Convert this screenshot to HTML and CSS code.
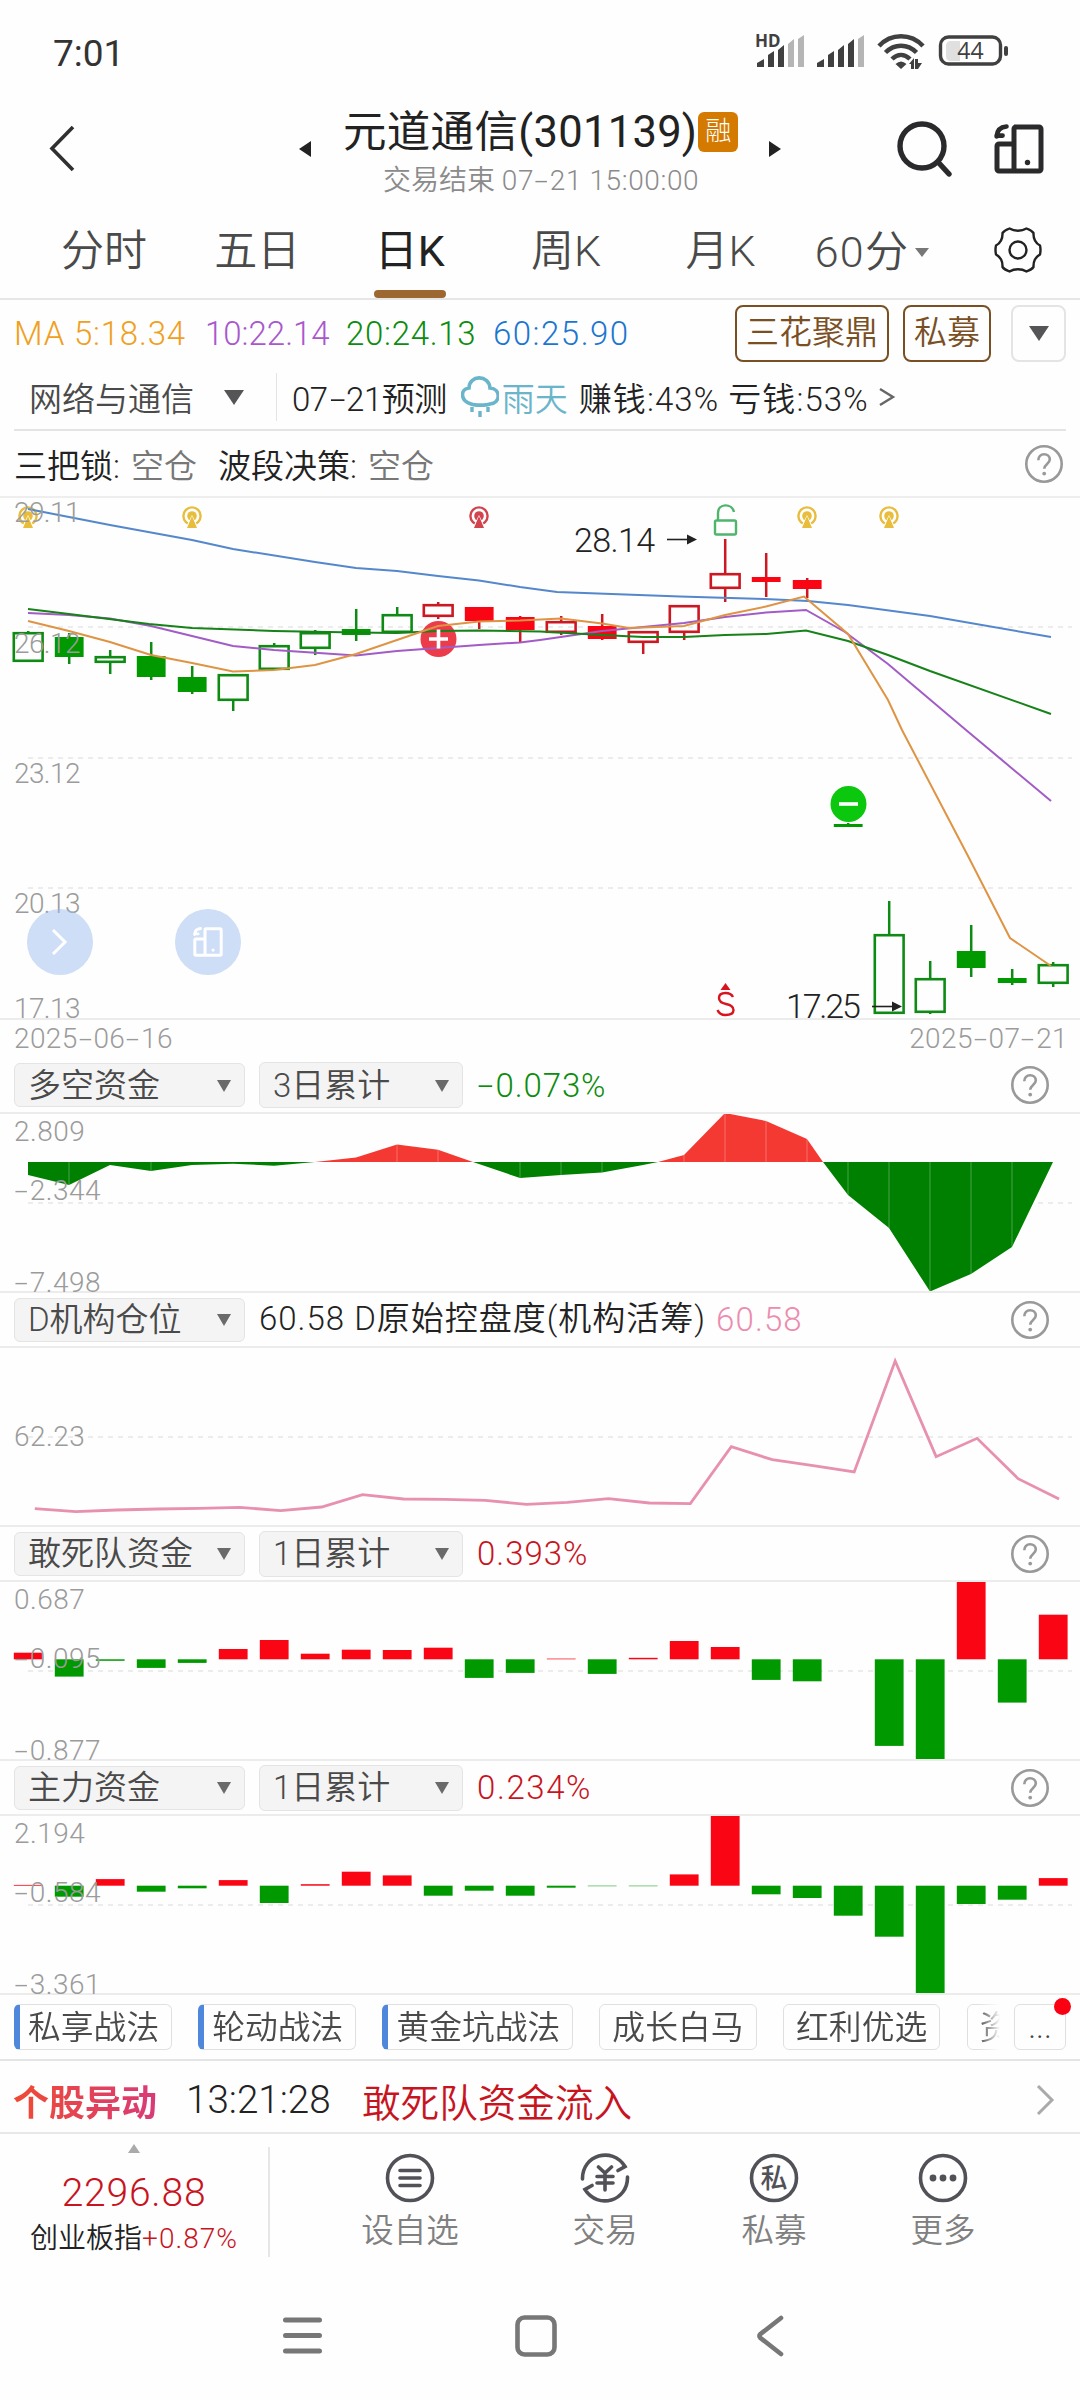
FILE: index.html
```html
<!DOCTYPE html>
<html lang="zh-CN">
<head>
<meta charset="utf-8">
<title>元道通信(301139)</title>
<link rel="stylesheet" href="styles.css">
</head>
<body>
<svg class="defs" width="0" height="0" aria-hidden="true">
  <symbol id="help" viewBox="0 0 40 40"><circle cx="20" cy="20" r="17.7" fill="none" stroke="#999" stroke-width="2.6"/><path d="M14.3 16.2c0-3.600 2.500-5.900 5.800-5.900s5.700 2.200 5.700 5.200c0 4.300-5.600 4.600-5.600 9.300" fill="none" stroke="#999" stroke-width="2.600"/><circle cx="20.200" cy="29.600" r="1.900" fill="#999"/></symbol>
  <symbol id="rotate" viewBox="0 0 50 50"><path d="M20 3h25a2 2 0 0 1 2 2v40a2 2 0 0 1-2 2H5a2 2 0 0 1-2-2V22a2 2 0 0 1 2-2h14M20 47V5a2 2 0 0 1 2-2" fill="none" stroke="currentColor" stroke-width="5"/><circle cx="33.500" cy="38.500" r="2.700" fill="currentColor"/><path d="M12.500 2.500C6 3 3 6.500 2.600 12.500M2.600 11.600h6" fill="none" stroke="currentColor" stroke-width="4.600" stroke-linecap="round"/></symbol>
</svg>
<main class="screen">
  <header class="status">
    <span class="clock">7:01</span>
    <div class="signals">
      <svg width="254" height="40" viewBox="0 0 254 40">
        <text x="0" y="13" class="hd">HD</text>
        <g fill="#404040"><path d="M2 33v-4l7-4v8zM13 33V21l6-4v16zM23 33V16l6-5v22z"/><path d="M62 33v-4l7-4v8zM73 33V21l6-4v16zM83 33V16l6-5v22zM93 33V10l6-5v28z"/></g>
        <g fill="#b5b5b5"><path d="M33 33V10l6-5v28zM43 33V5l6-4v32zM103 33V5l6-4v32z"/></g>
        <g fill="none" stroke="#404040" stroke-width="4.500"><path d="M124 12c12-13 32-13 44 0M130.500 18.500c9-9 22-9 31 0M137 25c5.500-5.500 12.500-5.500 18 0"/></g>
        <path d="M140.500 30q5.500-5 11 0l-5.500 5zM154 30l5-6v11h-3v-5zM160 35V25h3v4h4l-4 6z" fill="#404040"/>
        <rect x="185.500" y="3" width="60" height="27" rx="8" fill="#fff" stroke="#404040" stroke-width="3.400"/>
        <path d="M196 7h9v20h-9q-5 0-5-5V12q0-5 5-5z" fill="#e0e0e0"/>
        <rect x="249" y="12" width="4" height="10" rx="2" fill="#404040"/>
        <text x="215.500" y="25" class="battery" text-anchor="middle">44</text>
      </svg>
    </div>
  </header>

  <section class="titlebar">
    <svg class="back" width="30" height="50" viewBox="0 0 30 50"><path d="M25 3L4 24.500 25 46" fill="none" stroke="#303030" stroke-width="3.600"/></svg>
    <svg class="prev" width="12" height="16" viewBox="0 0 12 16"><path d="M12 0v16L0 8z" fill="#222"/></svg>
    <div class="names">
      <div class="name"><span>元道通信(301139)</span><b class="badge">融</b></div>
      <div class="session">交易结束 <span>07<i class="dash">-</i>21 15:00:00</span></div>
    </div>
    <svg class="next" width="12" height="16" viewBox="0 0 12 16"><path d="M0 0v16l12-8z" fill="#222"/></svg>
    <svg class="search" width="56" height="58" viewBox="0 0 56 58"><circle cx="26" cy="26" r="22" fill="none" stroke="#2a2a2c" stroke-width="5.400"/><path d="M42 42l11 12" stroke="#2a2a2c" stroke-width="5.400" stroke-linecap="round"/></svg>
    <svg class="turn" width="50" height="50"><use href="#rotate"/></svg>
  </section>

  <nav class="tabs">
    <span>分时</span><span>五日</span><span class="on">日K</span><span>周K</span><span>月K</span><span class="mins">60分<i></i></span>
    <svg width="48" height="48" viewBox="0 0 48 48"><path d="M15.500 2.500c5 3 12 3 17 0 3.500 1.300 6 3 7 4.500-.300 6.500 2 10 6.500 12.500q1 4.500 0 9c-4.500 2.500-6.800 6-6.500 12.500-1 1.500-3.500 3.200-7 4.500-5-3-12-3-17 0-3.500-1.300-6-3-7-4.500.300-6.500-2-10-6.500-12.500q-1-4.500 0-9C6.500 17 8.800 13.500 8.500 7c1-1.500 3.500-3.200 7-4.500z" fill="none" stroke="#222" stroke-width="2.400"/><circle cx="24" cy="24" r="8.500" fill="none" stroke="#222" stroke-width="2.400"/></svg>
  </nav>

  <section class="averages">
    <span class="ma5">MA 5:18.34</span><span class="ma10">10:22.14</span><span class="ma20">20:24.13</span><span class="ma60">60:25.90</span>
    <div class="picks"><span class="pick">三花聚鼎</span><span class="pick">私募</span><span class="drop"><i class="tri"></i></span></div>
  </section>

  <section class="forecast">
    <span class="sector">网络与通信</span><i class="tri"></i>
    <span class="day">07<i class="dash">-</i>21预测</span>
    <svg width="38" height="42" viewBox="0 0 38 42"><path d="M10 28C-1 25-1 13 8 12 8-1 28-2 29 12c11 1 11 15 0 16-4 1.500-15 1.500-19 0z" fill="none" stroke="#6bb5ca" stroke-width="3.600"/><path d="M11 31v5M19 35v6M27 31v5" stroke="#6bb5ca" stroke-width="3.400"/></svg>
    <span class="rain">雨天</span><span class="win">赚钱:43%</span><span class="lose">亏钱:53%</span>
    <svg class="go" width="18" height="20" viewBox="0 0 18 20"><path d="M2 2l13 8-13 8" fill="none" stroke="#666" stroke-width="2.400"/></svg>
  </section>

  <section class="locks">
    <span>三把锁:</span><em>空仓</em><span class="band">波段决策:</span><em>空仓</em>
    <svg width="40" height="40"><use href="#help"/></svg>
  </section>

  <section class="chart main-chart">
    <svg id="kline" width="1080" height="520" viewBox="0 498 1080 520"></svg>
    <span class="axis" style="top:-1px">29.11</span><span class="axis" style="top:130px">26.12</span><span class="axis" style="top:260px">23.12</span><span class="axis" style="top:390px">20.13</span><span class="axis" style="top:495px">17.13</span>
    <span class="price high">28.14</span><span class="price low">17.25</span>
    <span class="float first"><svg width="20" height="28" viewBox="0 0 20 28"><path d="M3 2l12 12L3 26" fill="none" stroke="#fff" stroke-width="3"/></svg></span>
    <span class="float second"><svg width="30" height="30"><use href="#rotate"/></svg></span>
  </section>
  <section class="dates"><span>2025<i class="dash">-</i>06<i class="dash">-</i>16</span><span>2025<i class="dash">-</i>07<i class="dash">-</i>21</span></section>

  <section class="bar tall"><span class="select">多空资金<i class="tri"></i></span><span class="select narrow">3日累计<i class="tri"></i></span><span class="down"><i class="dash">-</i>0.073%</span><svg width="40" height="40"><use href="#help"/></svg></section>
  <section class="chart">
    <svg id="flow" width="1080" height="177" viewBox="0 1114 1080 177"></svg>
    <span class="axis" style="top:2px">2.809</span><span class="axis" style="top:61px"><i class="dash">-</i>2.344</span><span class="axis" style="top:153px"><i class="dash">-</i>7.498</span>
  </section>

  <section class="bar"><span class="select">D机构仓位<i class="tri"></i></span><span class="hold">60.58 D原始控盘度(机构活筹)</span><span class="pink">60.58</span><svg width="40" height="40"><use href="#help"/></svg></section>
  <section class="chart">
    <svg id="holding" width="1080" height="177" viewBox="0 1348 1080 177"></svg>
    <span class="axis" style="top:73px">62.23</span>
  </section>

  <section class="bar"><span class="select">敢死队资金<i class="tri"></i></span><span class="select narrow">1日累计<i class="tri"></i></span><span class="up">0.393%</span><svg width="40" height="40"><use href="#help"/></svg></section>
  <section class="chart">
    <svg id="squad" width="1080" height="177" viewBox="0 1582 1080 177"></svg>
    <span class="axis" style="top:2px">0.687</span><span class="axis" style="top:61px"><i class="dash">-</i>0.095</span><span class="axis" style="top:153px"><i class="dash">-</i>0.877</span>
  </section>

  <section class="bar"><span class="select">主力资金<i class="tri"></i></span><span class="select narrow">1日累计<i class="tri"></i></span><span class="up wide">0.234%</span><svg width="40" height="40"><use href="#help"/></svg></section>
  <section class="chart">
    <svg id="majors" width="1080" height="177" viewBox="0 1816 1080 177"></svg>
    <span class="axis" style="top:2px">2.194</span><span class="axis" style="top:61px"><i class="dash">-</i>0.584</span><span class="axis" style="top:153px"><i class="dash">-</i>3.361</span>
  </section>

  <section class="tags">
    <div class="strip"><span class="tag vip">私享战法</span><span class="tag vip">轮动战法</span><span class="tag vip">黄金坑战法</span><span class="tag">成长白马</span><span class="tag">红利优选</span><span class="tag">资</span></div>
    <span class="more">...<i></i></span>
  </section>

  <section class="alert"><b>个股异动</b><time>13:21:28</time><span>敢死队资金流入</span><svg width="20" height="32" viewBox="0 0 20 32"><path d="M3 2l14 14L3 30" fill="none" stroke="#aaa" stroke-width="3"/></svg></section>

  <footer class="dock">
    <div class="index"><i class="caret"></i><strong>2296.88</strong><small>创业板指<em>+0.87%</em></small></div>
    <div class="action a1"><svg viewBox="0 0 50 50"><circle cx="25" cy="25" r="22.500"/><path d="M15 17.500h20M15 25h20M15 32.500h20"/></svg><span>设自选</span></div>
    <div class="action a2"><svg viewBox="0 0 50 50"><path d="M2.500 26C2 2 32-7 45 13.500l-7 4M47.500 24C48 48 18 57 5 36.500l7-4M18.500 14l6.500 6 6.500-6M17 23.500h16M17 30h16M25 20v17"/></svg><span>交易</span></div>
    <div class="action a3"><svg viewBox="0 0 50 50"><circle cx="25" cy="25" r="22.500"/><text x="25" y="35" text-anchor="middle" class="glyph">私</text></svg><span>私募</span></div>
    <div class="action a4"><svg viewBox="0 0 50 50"><circle cx="25" cy="25" r="22.500"/><g class="dots"><circle cx="15" cy="25" r="3.400"/><circle cx="25" cy="25" r="3.400"/><circle cx="35" cy="25" r="3.400"/></g></svg><span>更多</span></div>
  </footer>

  <nav class="system">
    <svg width="40" height="42" viewBox="0 0 40 42"><path d="M2.500 5h34M2.500 20.500h34M2.500 36h34" stroke="#777" stroke-width="5" stroke-linecap="round"/></svg>
    <svg width="42" height="42" viewBox="0 0 42 42"><rect x="2.500" y="2.500" width="37" height="37" rx="7" fill="none" stroke="#777" stroke-width="4.600"/></svg>
    <svg width="28" height="42" viewBox="0 0 28 42"><path d="M25 3L4.500 19q-2 2 0 4L25 39" fill="none" stroke="#777" stroke-width="4.600" stroke-linecap="round"/></svg>
  </nav>
</main>
<script src="charts.js"></script>
</body>
</html>
```
FILE: styles.css
```css
* { box-sizing: border-box; }
body { margin: 0; background: #fefefe; font-family: Roboto, "Noto Sans CJK SC", sans-serif; font-weight: 350; font-size: 33px; color: #222; }
i, em { font-style: normal; }
svg { display: block; flex: none; }
.defs { position: absolute; }
.screen { width: 1080px; height: 2400px; display: flex; flex-direction: column; overflow: hidden; white-space: nowrap; }
.screen > * { flex: none; }
.dash { display: inline-block; width: .56em; text-align: center; transform: scaleX(1.75); }
.tri { border: 10px solid transparent; border-top: 15px solid #555558; border-bottom: 0; }

.status { height: 104px; display: flex; align-items: center; justify-content: space-between; padding: 3px 71px 0 53px; }
.clock { font-size: 37px; font-weight: 400; color: #333; }
.signals svg { overflow: visible; }
.hd { font: 700 17px "Noto Sans", sans-serif; fill: #404040; }
.battery { font: 400 23px "Open Sans", sans-serif; fill: #404040; }

.titlebar { height: 102px; display: flex; align-items: center; padding: 0 36px 0 48px; }
.back { margin-top: -12px; }
.prev { margin: -12px 0 0 221px; }
.names { width: 396px; margin-left: 32px; height: 100px; }
.name { display: flex; align-items: flex-start; height: 58px; font-size: 43.500px; line-height: 56px; font-weight: 400; letter-spacing: .3px; }
.badge { width: 40px; height: 40px; margin: 7px 0 0 1px; border-radius: 6px; background: #d57a00; color: #fff; font-size: 26px; font-weight: 300; line-height: 39px; text-align: center; }
.session { font-size: 28px; line-height: 36px; color: #8b8b8b; padding-left: 40px; }
.session span { letter-spacing: .6px; }
.next { margin: -12px 0 0 30px; }
.search { margin: -12px 0 0 115px; }
.turn { margin: -12px 0 0 auto; color: #2a2a2c; }

.tabs { height: 94px; display: flex; align-items: center; border-bottom: 2px solid #e6e6e6; font-size: 43px; color: #4a4a4a; padding: 0 38px 0 61px; }
.tabs span { width: 154px; line-height: 90px; height: 92px; }
.tabs .on { color: #222; font-weight: 400; position: relative; left: 7px; }
.tabs .on::after { content: ""; position: absolute; left: -1px; bottom: 0; width: 72px; height: 8px; border-radius: 4px; background: #9d6732; }
.tabs span:nth-child(4) { padding-left: 10px; }
.tabs span:nth-child(5) { padding-left: 11px; }
.tabs .mins { display: flex; align-items: center; padding-left: 0; margin-left: -13px; width: 180px; gap: 6px; letter-spacing: 1.2px; }
.mins i { border: 7px solid transparent; border-top: 9px solid #777; border-bottom: 0; }
.tabs svg { margin: -5px 0 0 auto; }

.averages { height: 67px; display: flex; align-items: center; padding-left: 14px; }
.averages .ma5 { color: #f0a020; width: 191px; letter-spacing: .8px; }
.averages .ma10 { color: #a858cc; width: 141px; }
.averages .ma20 { color: #0d8c0d; width: 147px; letter-spacing: .7px; }
.averages .ma60 { color: #1b76d0; letter-spacing: 1.5px; }
.picks { margin: 0 14px 0 auto; display: flex; }
.pick { height: 57px; margin-right: 14px; padding: 0 9px; border: 2px solid #7a4f24; border-radius: 8px; color: #7a4f24; line-height: 51px; }
.drop { width: 55px; height: 57px; margin-left: 6px; border: 2px solid #e4e4e4; border-radius: 8px; display: flex; align-items: center; justify-content: center; }

.forecast { height: 64px; margin: 0 14px; padding-bottom: 2px; display: flex; align-items: center; border-bottom: 2px solid #e4e4e4; }
.sector { width: 210px; padding-left: 15px; color: #4a4a4a; }
.day { margin-left: 32px; padding-left: 15px; border-left: 1px solid #e4e4e4; letter-spacing: -.5px; }
.forecast svg { margin-left: 14px; }
.rain { color: #6bb5ca; margin-left: 3px; }
.win, .lose { letter-spacing: 1.1px; }
.win { margin-left: 11px; }
.lose { margin-left: 9px; }
.forecast .go { margin-left: 9px; }

.locks { height: 67px; display: flex; align-items: center; padding: 0 16px 0 14px; border-bottom: 2px solid #eee; }
.locks em { color: #777; margin-left: 11px; }
.band { margin-left: 21px; }
.locks svg { margin-left: auto; }

.chart { position: relative; border-bottom: 2px solid #ececec; }
.axis { position: absolute; left: 14px; font-size: 28px; line-height: 32px; color: #9b9b9b; letter-spacing: .5px; }
.main-chart .axis { letter-spacing: -.6px; }
.price { position: absolute; line-height: 40px; font-size: 34px; letter-spacing: -.6px; }
.high { left: 574px; top: 22px; }
.low { left: 786px; top: 488px; letter-spacing: -2.2px; }
.float { position: absolute; width: 66px; height: 66px; border-radius: 50%; background: rgba(155,190,238,.5); top: 411px; display: flex; align-items: center; justify-content: center; color: #fff; }
.first { left: 27px; }
.second { left: 175px; }

.dates { height: 38px; display: flex; justify-content: space-between; padding: 1px 12px 0 14px; font-size: 28px; line-height: 36px; color: #9b9b9b; letter-spacing: .4px; }

.bar { height: 55px; display: flex; align-items: center; padding: 0 30px 0 14px; border-bottom: 2px solid #ececec; }
.tall { height: 56px; }
.select { width: 231px; height: 44px; padding: 0 13px 0 13px; display: flex; align-items: center; justify-content: space-between; background: #f4f4f4; border: 1px solid #e4e4e4; border-radius: 6px; color: #4a4a4a; margin-right: 14px; line-height: 42px; }
.tall .select { padding-top: 2px; }
.narrow { width: 204px; height: 46px; }
.select .tri { border-width: 12px 7.500px 0; border-top-color: #6a6a6a; }
.bar svg { margin-left: auto; }
.up { color: #c8141e; letter-spacing: 1px; }
.wide { letter-spacing: 1.6px; }
.down { color: #0d8c0d; letter-spacing: .9px; }
.hold { letter-spacing: 1px; line-height: 50px; padding-bottom: 2px; }
.pink { color: #ec8cae; margin-left: 10px; letter-spacing: 1.1px; }

.tags { height: 66px; display: flex; padding: 9px 14px 0; border-bottom: 2px solid #e4e4e4; }
.strip { width: 986px; height: 48px; display: flex; overflow: hidden; -webkit-mask-image: linear-gradient(90deg, #000 965px, transparent 986px); mask-image: linear-gradient(90deg, #000 965px, transparent 986px); }
.tag { flex: none; height: 46px; padding: 0 12px; margin-right: 26.500px; border: 1px solid #e0e0e0; border-radius: 6px; color: #4a4a4a; font-size: 32.800px; line-height: 46px; }
.vip { border-left: 6px solid #4f87dc; padding: 0 12px 0 8px; margin-right: 26px; }
.more { width: 52px; height: 46px; margin-left: auto; border: 1px solid #e0e0e0; border-radius: 6px; text-align: center; position: relative; line-height: 44px; color: #444; }
.more i { position: absolute; width: 17px; height: 17px; border-radius: 50%; background: #fa0012; top: -7px; right: -6px; }

.alert { height: 73px; display: flex; align-items: center; padding: 6px 25px 0 13px; border-bottom: 2px solid #e8e8e8; font-size: 38.600px; }
.alert b { font-size: 36px; font-weight: 700; background: linear-gradient(90deg, #f04b32, #d83a78); -webkit-background-clip: text; background-clip: text; color: transparent; }
.alert time { width: 144px; margin: 0 32px 0 29px; }
.alert span { color: #c8141e; }
.alert svg { margin-left: auto; }

.dock { height: 142px; display: flex; }
.index { width: 270px; height: 110px; margin-top: 13px; border-right: 2px solid #e6e6e6; display: flex; flex-direction: column; align-items: center; }
.caret { border: 6px solid transparent; border-bottom: 9px solid #aaa; border-top: 0; margin-top: -3px; }
.index strong { font-size: 39px; font-weight: 300; line-height: 46px; margin-top: 17px; color: #c8141e; letter-spacing: .8px; }
.index small { font-size: 28px; line-height: 34px; margin-top: 6px; }
.index em { color: #c8141e; letter-spacing: 1px; }
.action { display: flex; flex-direction: column; align-items: center; padding-top: 19px; color: #808080; width: 168px; }
.action svg { width: 50px; height: 50px; fill: none; stroke: #515158; stroke-width: 3.600; stroke-linecap: round; }
.action span { line-height: 40px; margin-top: 8px; font-size: 32.500px; }
.action .dots { fill: #515158; stroke: none; }
.action .glyph { fill: #515158; stroke: none; font-size: 27px; font-weight: 500; }
.a1 { margin-left: 56px; }
.a2 { margin-left: 27px; }
.a3 { margin-left: 1px; }
.a4 { margin-left: 1px; }

.system { height: 119px; display: flex; align-items: center; }
.system svg:nth-child(1) { margin-left: 283px; }
.system svg:nth-child(2) { margin-left: 192px; }
.system svg:nth-child(3) { margin-left: 199px; }
```
FILE: charts.js
```js
const GREEN = '#009900', RED = '#fa0514', DGREEN = '#0f8a14', DRED = '#cb1823';
const x = i => 28.2 + 41 * i;
const line = (pts, color, w) => `<polyline points="${pts}" fill="none" stroke="${color}" stroke-width="${w}"/>`;
const grid = y => `<path d="M28 ${y}H1072" stroke="#ececec" stroke-width="2" stroke-dasharray="5 5"/>`;

// [kind, body top, body bottom, wick top, wick bottom]; kind: g/r = hollow, G/R = solid
const candles = [
  ['g',632,662,631,662],['G',637,657,633,664],['g',656,663,650,674],['G',656,677,642,680],['G',677,692,666,694],
  ['g',674,701,674,711],['g',645,670,643,670],['g',632,649,630,655],['G',629,635,609,641],['g',614,633,607,633],
  ['r',604,617,602,619],['R',607,621,607,629],['R',617,630,616,642],['r',621,633,616,635],['R',626,639,614,640],
  ['r',631,643,631,654],['r',605,633,605,640],['r',573,589,539,602],['R',577,582,553,597],['R',580,589,578,598],
  ['G',824,827,823,827],['g',934,1014,901,1014],['g',978,1013,961,1014],['G',951,968,925,977],['G',978,983,969,985],['g',964,984,962,987]
];
const candle = ([k, t, b, wt, wb], i) => {
  const red = k.toLowerCase() === 'r', solid = k < 'a', c = red ? DRED : DGREEN, cx = x(i);
  const wick = `<path d="M${cx} ${wt}V${t}M${cx} ${b}V${wb}" stroke="${c}" stroke-width="2.5"/>`;
  return wick + (solid
    ? `<rect x="${cx - 14.4}" y="${t}" width="28.8" height="${b - t}" fill="${red ? RED : GREEN}"/>`
    : `<rect x="${cx - 14.4}" y="${t + 1.2}" width="28.8" height="${b - t - 2.4}" fill="none" stroke="${c}" stroke-width="2.6"/>`);
};
const radio = (cx, c) => `<g transform="translate(${cx} 516)"><circle r="8.6" fill="none" stroke="${c}" stroke-width="2.4"/><circle r="4.800" fill="${c}"/><path d="M0-1L7 13H-7z" fill="#fefefe"/><path d="M0 0L5 12H-5z" fill="${c}"/></g>`;
const arrow = (ax, y) => `<path d="M${ax} ${y}h22" stroke="#222" stroke-width="1.6"/><path d="M${ax + 20} ${y - 5}l10 5-10 5z" fill="#222"/>`;
const gold = '#e8bd3c';

document.getElementById('kline').innerHTML =
  grid(627) + grid(758) + grid(888) + candles.map(candle).join('') +
  [28, 192, 807, 889].map(v => radio(v, gold)).join('') + radio(479, '#d2434d') +
  line('28,509 110,525 192,540 233,549 315,562 356,568 397,571 438,576 479,580.5 520,587 557,592 680,596.5 765,599 808,601 848,605 930,616 1051,637', '#5487cb', 2) +
  `<circle cx="438.500" cy="639" r="18" fill="#ec3c4a"/>` +
  line('28,613 69,615 110,618.5 151,626 192,636 233,646 274,650 356,655.5 397,651 438,648 479,645 520,642.5 540,640 602,631 643,627 684,623 725,617 766,612.5 806,610 845,632 888,664 966,730 1051,801', '#a25cc6', 2) +
  line('28,609 69,614 149,624 192,628 274,631 356,632.5 397,633 438,631 479,630.5 540,631.5 602,635 643,637 684,637 725,635 766,634 806,630.5 848,641 888,655 930,671 1051,714', '#168218', 2) +
  line('28,621 69,631 110,642 151,655 192,663 233,671.5 274,670 315,665 356,654 397,640 438,626 479,621.5 520,620.5 561,618.5 602,623.5 629,628 684,626 725,615 766,606.5 804,596.5 848,634 888,700 902,730 968,856 1010,938 1051,966', '#de9444', 2) +
  `<path d="M429 639h19M438.500 629.500v19" stroke="#fff" stroke-width="3.600"/>` +
  `<circle cx="848.500" cy="804" r="18" fill="#0bc80f"/><path d="M839 804h19" stroke="#fff" stroke-width="3.600"/>` +
  `<g fill="none" stroke="#4fb46c" stroke-width="2.400"><rect x="715" y="520.500" width="21" height="14" rx="1.500"/><path d="M718 520v-7c0-10 14-10 16-1"/></g>` +
  arrow(667, 539.5) + arrow(872, 1006.5) +
  `<path d="M725.500 983l5 7h-10z" fill="#d8141e"/><path d="M733 997q-2-4-7.500-4-6.500 0-6.500 5 0 4.500 7 6 7.500 1.500 7.500 6 0 5-8 5-6 0-8-5" fill="none" stroke="#d8141e" stroke-width="2.400"/>`;

const seams = (pts, base) => pts.map(([px, py]) => `<path d="M${px} ${py}V${base}" stroke="#fff" stroke-opacity=".35" stroke-width=".8"/>`).join('');
const redHills = ['315,1162 356,1157.5 397,1144.5 438,1149.7 473,1162', '658,1162 684,1155 725,1113 766,1121 807,1139 823,1162'];
const greenHills = ['28,1162 28,1175 69,1185 110,1165 151,1171 192,1165 233,1163.700 274,1165.700 315,1162', '473,1162 520,1178 561,1175 602,1172.500 643,1165 658,1162', '823,1162 848,1195 889,1228 930,1291.500 971,1274 1012,1247 1053,1162'];
document.getElementById('flow').innerHTML = grid(1203) +
  redHills.map(p => `<polygon points="${p}" fill="#f43832"/>`).join('') +
  greenHills.map(p => `<polygon points="${p}" fill="#008000"/>`).join('') +
  seams([[69,1185],[151,1171],[397,1144],[438,1150],[520,1178],[561,1175],[602,1172],[684,1155],[725,1113],[766,1121],[807,1139],[848,1195],[889,1228],[930,1291],[971,1274],[1012,1247]], 1162);

const held = [656,665,660,657,655,652,662,651,614,627,628,631,643,637,626,639,641,470,509,527,546,213,500,445,566,627];
document.getElementById('holding').innerHTML = grid(1437) +
  line(held.map((v, i) => `${34.8 + 40.97 * i},${1290 + v / 3}`).join(' '), '#e890b0', 2.8);

// Positive values rise above the zero line, negative ones fall below it.
const bars = (id, zero, dashY, values) => {
  document.getElementById(id).innerHTML = grid(dashY) + values.map((v, i) => v === 0 ? '' :
    `<rect x="${x(i) - 14.4}" y="${v > 0 ? zero - v : zero}" width="28.8" height="${Math.abs(v)}" fill="${v > 0 ? RED : GREEN}"/>`).join('');
};
bars('squad', 1659.3, 1671, [6.600,-17.300,-1.500,-8.600,-3.600,10.300,19.300,5.600,9.600,9.300,11.600,-18.600,-13.600,.7,-14.600,1.500,18.300,12.300,-20.600,-22,0,-86.600,-100.300,78.300,-43.300,44.600]);
bars('majors', 1885.7, 1905, [.8,-11,6.600,-6,-2.600,5.600,-17.300,1.500,14,10.300,-10,-5,-10,-2,-.5,-.5,11.300,70.600,-8.600,-12.300,-30,-51,-108.300,-18.300,-14,7.600]);
```
